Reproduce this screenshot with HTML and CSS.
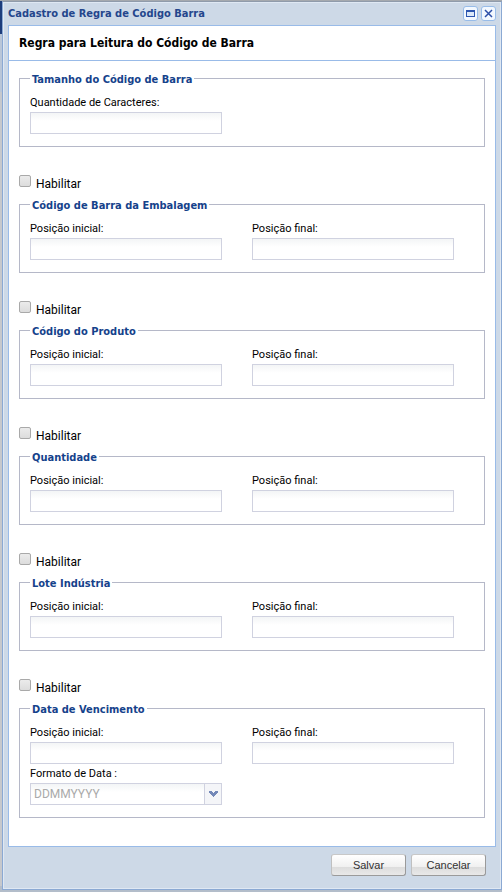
FILE: index.html
```html
<!DOCTYPE html>
<html lang="pt-BR">
<head>
    <meta charset="UTF-8">
    <meta name="viewport" content="width=device-width, initial-scale=1.0">
    <title>Cadastro de Regra de Código Barra</title>
    <link rel="stylesheet" href="styles.css">
</head>
<body>
    <form class="window">
        <header class="titlebar">
            <h1>Cadastro de Regra de Código Barra</h1>
            <button type="button" class="tool" aria-label="Maximizar">
                <svg width="9" height="7" viewBox="0 0 9 7" shape-rendering="crispEdges"><path fill="#2c56b0" d="M0 0h9v7H0zM1 2v4h7V2z" fill-rule="evenodd"/><path fill="#dce9f9" d="M1 2h7v4H1z"/></svg>
            </button>
            <button type="button" class="tool" aria-label="Fechar">
                <svg width="9" height="9" viewBox="0 0 9 9"><path d="M1 1l7 7M8 1l-7 7" stroke="#2c4fa8" stroke-width="1.5"/></svg>
            </button>
        </header>

        <main class="panel">
            <h2>Regra para Leitura do Código de Barra</h2>
            <div class="panel-body">
                <fieldset>
                    <legend>Tamanho do Código de Barra</legend>
                    <div class="fields">
                        <div class="field">
                            <label for="qtdCaracteres">Quantidade de Caracteres:</label>
                            <input type="text" id="qtdCaracteres">
                        </div>
                    </div>
                </fieldset>

                <label class="enable"><input type="checkbox"> Habilitar</label>
                <fieldset>
                    <legend>Código de Barra da Embalagem</legend>
                    <div class="fields">
                        <div class="field">
                            <label for="embalagemInicial">Posição inicial:</label>
                            <input type="text" id="embalagemInicial">
                        </div>
                        <div class="field">
                            <label for="embalagemFinal">Posição final:</label>
                            <input type="text" id="embalagemFinal">
                        </div>
                    </div>
                </fieldset>

                <label class="enable"><input type="checkbox"> Habilitar</label>
                <fieldset>
                    <legend>Código do Produto</legend>
                    <div class="fields">
                        <div class="field">
                            <label for="produtoInicial">Posição inicial:</label>
                            <input type="text" id="produtoInicial">
                        </div>
                        <div class="field">
                            <label for="produtoFinal">Posição final:</label>
                            <input type="text" id="produtoFinal">
                        </div>
                    </div>
                </fieldset>

                <label class="enable"><input type="checkbox"> Habilitar</label>
                <fieldset>
                    <legend>Quantidade</legend>
                    <div class="fields">
                        <div class="field">
                            <label for="quantidadeInicial">Posição inicial:</label>
                            <input type="text" id="quantidadeInicial">
                        </div>
                        <div class="field">
                            <label for="quantidadeFinal">Posição final:</label>
                            <input type="text" id="quantidadeFinal">
                        </div>
                    </div>
                </fieldset>

                <label class="enable"><input type="checkbox"> Habilitar</label>
                <fieldset>
                    <legend>Lote Indústria</legend>
                    <div class="fields">
                        <div class="field">
                            <label for="loteInicial">Posição inicial:</label>
                            <input type="text" id="loteInicial">
                        </div>
                        <div class="field">
                            <label for="loteFinal">Posição final:</label>
                            <input type="text" id="loteFinal">
                        </div>
                    </div>
                </fieldset>

                <label class="enable"><input type="checkbox"> Habilitar</label>
                <fieldset>
                    <legend>Data de Vencimento</legend>
                    <div class="fields">
                        <div class="field">
                            <label for="dataInicial">Posição inicial:</label>
                            <input type="text" id="dataInicial">
                        </div>
                        <div class="field">
                            <label for="dataFinal">Posição final:</label>
                            <input type="text" id="dataFinal">
                        </div>
                        <div class="field">
                            <label for="formatoData">Formato de Data :</label>
                            <div class="combo">
                                <select id="formatoData" disabled>
                                    <option>DDMMYYYY</option>
                                </select>
                                <span class="trigger">
                                    <svg width="9" height="6" viewBox="0 0 9 6" shape-rendering="crispEdges"><path fill="#7388b8" d="M0 0h3v1h1v1h1V1h1V0h3v2H8v1H7v1H6v1H5v1H4V5H3V4H2V3H1V2H0z"/></svg>
                                </span>
                            </div>
                        </div>
                    </div>
                </fieldset>
            </div>
        </main>

        <footer class="actions">
            <button type="button" class="btn">Salvar</button>
            <button type="button" class="btn">Cancelar</button>
        </footer>
    </form>
</body>
</html>
```
FILE: styles.css
```css
* {
    box-sizing: border-box;
}
body {
    margin: 0;
    padding: 1px 0 3px 2px;
    min-height: 100vh;
    display: flex;
    font-family: Roboto, "Noto Sans", sans-serif;
    font-size: 11px;
    color: #000;
    background: linear-gradient(#a5a9ae 0, #a5a9ae 1px, #1d3d7c 1px, #1d3d7c 34px, #b9c6d8 34px, #b9c6d8 92px, #c6c8cc 92px, #c6c8cc 886px, #b3bdca 886px);
}
h1, h2 {
    margin: 0;
}
.window {
    flex: 1;
    display: flex;
    flex-direction: column;
    padding: 0 5px;
    border: 1px solid #8ba9d3;
    border-top-color: #8f9bab;
    background-color: #cdd9e7;
    box-shadow: inset 0 0 0 1px #dfe8f3;
}
.titlebar {
    display: flex;
    align-items: center;
    gap: 3px;
    height: 23px;
}
.titlebar h1 {
    flex: 1;
    font: bold 11px/16px "DejaVu Sans Condensed", "DejaVu Sans", sans-serif;
    color: #24468c;
}
.tool {
    display: flex;
    align-items: center;
    justify-content: center;
    width: 15px;
    height: 15px;
    padding: 0;
    border: 1px solid #98bce8;
    border-radius: 3px;
    background-color: #f2f8ff;
}
.panel {
    flex: 1;
    border: 1px solid #99bbe8;
    background-color: #fff;
}
.panel h2 {
    padding: 0 10px;
    font: bold 12px/34px "DejaVu Sans Condensed", "DejaVu Sans", sans-serif;
    border-bottom: 1px solid #99bbe8;
}
.panel-body {
    padding: 11px 10px 28px;
}
fieldset {
    min-width: 0;
    margin: 0;
    padding: 8px 10px 12px;
    border: 1px solid #b5b8c8;
}
legend {
    padding: 2px 2px 0;
    font: bold 11px/11px "DejaVu Sans Condensed", "DejaVu Sans", sans-serif;
    color: #15428b;
}
.fields {
    display: grid;
    grid-template-columns: 192fr 202fr;
    column-gap: 30px;
    padding-right: 20px;
}
.field label {
    display: block;
    height: 19px;
    line-height: 20px;
}
.field input,
.combo select {
    display: block;
    width: 100%;
    height: 22px;
    padding: 1px 3px;
    font: 12px Roboto, "Noto Sans", sans-serif;
    border: 1px solid #d0d2e0;
    border-radius: 0;
    background: linear-gradient(#f3f5f6, #fff 8px);
}
.combo {
    position: relative;
}
.combo select {
    appearance: none;
    color: #aaa;
    opacity: 1;
}
.trigger {
    position: absolute;
    top: 1px;
    right: 1px;
    bottom: 1px;
    width: 17px;
    display: flex;
    align-items: center;
    justify-content: center;
    border-left: 1px solid #d0d2e0;
    background-color: #f4f5f8;
    pointer-events: none;
}
.enable {
    display: flex;
    align-items: flex-end;
    gap: 5px;
    width: max-content;
    height: 18px;
    margin: 27px 0 6px;
    font-size: 12px;
    line-height: 16px;
}
.enable input {
    appearance: none;
    align-self: flex-start;
    width: 12px;
    height: 12px;
    margin: 1px 0;
    border: 1px solid #a9a9a9;
    border-radius: 2px;
    background: linear-gradient(#ebebeb, #dcdcdc);
}
.actions {
    display: flex;
    justify-content: flex-end;
    gap: 5px;
    padding: 7px 10px 13px;
}
.btn {
    width: 75px;
    height: 22px;
    padding: 0;
    font: 11px "Liberation Sans", Arial, sans-serif;
    color: #333;
    border: 1px solid #b4b4b4;
    border-color: #c8c8c8 #9a9a9a #9a9a9a #c0c0c0;
    border-radius: 3px;
    background: linear-gradient(#fff, #f0f0f0 60%, #dcdcdc 60%, #e8e8e8);
}
```
